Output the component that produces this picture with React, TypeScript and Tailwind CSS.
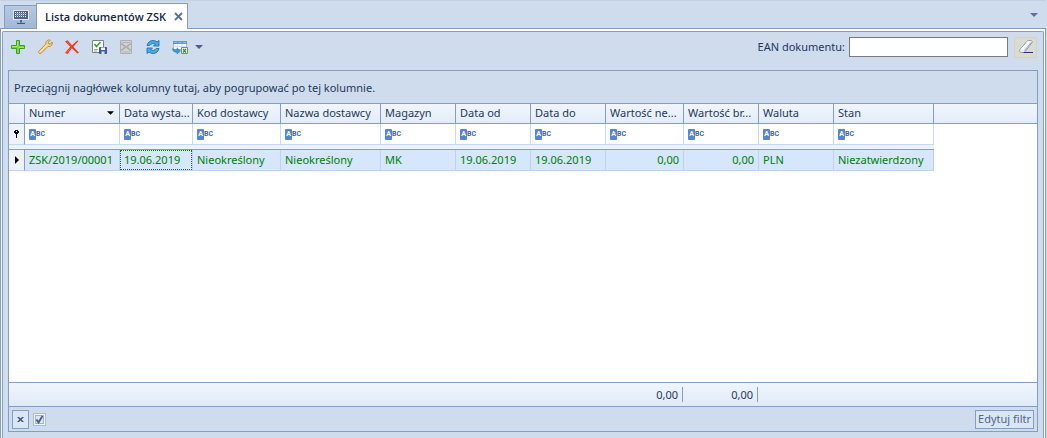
import { useState } from "react";

type Column = {
  title: string;
  value: string;
  numeric?: boolean;
  sorted?: boolean;
  sum?: string;
};

const columns: Column[] = [
  { title: "Numer", value: "ZSK/2019/00001", sorted: true },
  { title: "Data wystawienia", value: "19.06.2019" },
  { title: "Kod dostawcy", value: "Nieokreślony" },
  { title: "Nazwa dostawcy", value: "Nieokreślony" },
  { title: "Magazyn", value: "MK" },
  { title: "Data od", value: "19.06.2019" },
  { title: "Data do", value: "19.06.2019" },
  { title: "Wartość netto", value: "0,00", numeric: true, sum: "0,00" },
  { title: "Wartość brutto", value: "0,00", numeric: true, sum: "0,00" },
  { title: "Waluta", value: "PLN" },
  { title: "Stan", value: "Niezatwierdzony" },
];

const shortTitles: Record<string, string> = {
  "Data wystawienia": "Data wysta...",
  "Wartość netto": "Wartość ne...",
  "Wartość brutto": "Wartość br...",
};

function Columns() {
  return (
    <colgroup>
      <col className="w-4" />
      <col className="w-[95px]" />
      <col className="w-[73px]" />
      <col className="w-[88px]" />
      <col className="w-[100px]" />
      <col className="w-[75px]" />
      <col className="w-[75px]" />
      <col className="w-[75px]" />
      <col className="w-[78px]" />
      <col className="w-[75px]" />
      <col className="w-[75px]" />
      <col className="w-[100px]" />
      <col />
    </colgroup>
  );
}

function MonitorIcon() {
  return (
    <svg viewBox="0 0 16 16" className="size-4" aria-hidden="true">
      <rect x="0.5" y="1.5" width="15" height="9" fill="#4a6498" stroke="#dfe8f6" />
      <path d="M2 3.500h12M2 5.500h12M2 7.500h12" stroke="#e8f0fc" strokeDasharray="1 1" />
      <path d="M3 4.500h10M3 6.500h8" stroke="#7f9bcb" strokeDasharray="1 1" />
      <path d="M7 11h2v3H7z" fill="#4c6693" />
      <path d="M4 14.500h8" stroke="#3d5787" />
      <path d="M3 13.500h10" stroke="#8fa5c8" strokeWidth="0.500" />
    </svg>
  );
}

function PlusIcon() {
  return (
    <svg viewBox="0 0 16 16" className="size-4" aria-hidden="true">
      <path d="M6.500 1.500h3v5h5v3h-5v5h-3v-5h-5v-3h5z" fill="#7fd63a" stroke="#36a02c" />
      <path d="M7.500 2v5.500H2M8.500 8.500H14" stroke="#a6ea62" fill="none" />
    </svg>
  );
}

function WrenchIcon() {
  return (
    <svg viewBox="0 0 16 16" className="size-4" aria-hidden="true">
      <path
        d="M10 1.800c1-.9 2.300-1.100 3.300-.7l-2 2.100.4 1.500 1.500.4 2-2.100c.3 1.500 0 2.800-1 3.700-.9.800-2.100 1-3.200.7L4.600 13.900c-.7.800-1.800.9-2.500.2s-.6-1.800.2-2.500L8.800 5.200C8.500 4 8.900 2.700 10 1.800z"
        fill="#f7d483"
        stroke="#b98436"
        strokeWidth="0.9"
      />
      <path d="M3 12.800L9.800 6" stroke="#fff0bd" strokeWidth="0.9" />
    </svg>
  );
}

function DeleteIcon() {
  return (
    <svg viewBox="0 0 16 16" className="size-4" aria-hidden="true">
      <path
        d="M1 2.500L3.500 1.300 8 6.200 13.300 1.500 14.500 2 9.300 7.700 15 13.800 13.500 14.500 7.900 9.300 3.500 15 1 14 6.200 7.700z"
        fill="#f0371a"
      />
      <path d="M2.800 2.800l4.700 5M2.800 13.500L7 8.800" stroke="#ff6a45" strokeWidth="0.800" />
    </svg>
  );
}

function ApproveIcon() {
  return (
    <svg viewBox="0 0 16 16" className="size-4" aria-hidden="true">
      <path d="M1.500 1.500h11v12h-11z" fill="#fdfefc" stroke="#77857c" />
      <path d="M3.500 5l2 2.500L9.500 3" stroke="#2fa12f" strokeWidth="1.700" fill="none" />
      <path d="M3 10.500h4M3 12h3" stroke="#9aaaa0" />
      <path d="M8.500 8.500h7v6h-7z" fill="#3e5fb4" stroke="#3a56a3" />
      <path d="M10 8.500h4V11h-4z" fill="#f2f6ff" />
      <path d="M10.500 12.500h3V15h-3z" fill="#dbe6fa" />
    </svg>
  );
}

function CancelIcon() {
  return (
    <svg viewBox="0 0 16 16" className="size-4" aria-hidden="true">
      <path d="M2.500 1.500h11v13h-11z" fill="#cfd1d2" stroke="#aeb1b3" />
      <path d="M3 4.500l10 7M13 4.500l-10 7" stroke="#a3a6a8" strokeWidth="1.200" />
      <path d="M4 3.500h8M4 13h8M5 8h6" stroke="#b3b6b8" />
    </svg>
  );
}

function RefreshIcon() {
  return (
    <svg viewBox="0 0 16 16" className="size-4" aria-hidden="true">
      <path
        d="M2 6.500C2.600 3.500 5 1.500 8 1.500c1.500 0 2.900.5 4 1.400L14 1.500v5.500H8.500l1.800-1.900C8.500 4.200 6.200 4.300 4.800 6.500z"
        fill="#49a9e0"
        stroke="#1f76b4"
        strokeWidth="0.900"
      />
      <path
        d="M14 9.500c-.6 3-3 5-6 5-1.500 0-2.900-.5-4-1.400L2 14.500V9h5.500l-1.800 1.900c1.800.9 4.100.8 5.500-1.400z"
        fill="#49a9e0"
        stroke="#1f76b4"
        strokeWidth="0.900"
      />
    </svg>
  );
}

function ExportIcon() {
  return (
    <svg viewBox="0 0 16 16" className="size-4" aria-hidden="true">
      <path d="M1.500 2.500h13v8h-13z" fill="#f7fafd" stroke="#9dbbdd" />
      <path d="M1 2h14v3H1z" fill="#5b98d4" />
      <path d="M2 3.500h3M6.500 3.500h3M11 3.500h3" stroke="#8cbbe6" />
      <path d="M2 7.500h12M5.500 5v5M10 5v5" stroke="#d3e0f0" />
      <path d="M.5 9.500c-.2 2.300 1.700 4 4.500 3.800V15l3.500-3L5 9v1.700c-1.600.1-3-.2-4.500-1.200z" fill="#3d97d6" stroke="#2a73b3" strokeWidth="0.500" />
      <path d="M9.500 8.500h6v6h-6z" fill="#eef8ea" stroke="#4aa75c" />
      <path d="M11 10l3 3.500M14 10l-3 3.500" stroke="#2b9441" strokeWidth="1.200" />
    </svg>
  );
}

function EraserIcon() {
  return (
    <svg viewBox="0 0 16 16" className="size-4" aria-hidden="true">
      <path
        d="M2 10.500L8.800 2.500c.5-.6 1.100-1 1.900-1h2c1.400 0 2 1.200 1.200 2.300L7.200 12.500c-.5.600-1 .9-1.700.9H3.200c-1.500 0-2.100-1.700-1.200-2.900z"
        fill="#eef1f7"
        stroke="#9299ac"
      />
      <path d="M6.500 11.500L13.200 3.500" stroke="#9aa4c0" />
      <path d="M4 10L10.500 2.800" stroke="#fff" strokeWidth="1.800" />
      <path d="M5.500 13.500H15" stroke="#26306c" />
    </svg>
  );
}

function CaretDown({ className }: { className: string }) {
  return (
    <svg viewBox="0 0 8 4" className={className} aria-hidden="true">
      <path d="M0 0h8L4 4z" fill="currentColor" />
    </svg>
  );
}

function TextFilterMark() {
  return (
    <span className="flex shrink-0 items-center font-['Roboto','Liberation_Sans',sans-serif] text-[7px] leading-none font-bold text-[#46639c]">
      <span className="flex h-[11px] w-[7px] items-center justify-center rounded-[1px] bg-[#5585d6] text-white">
        A
      </span>
      BC
    </span>
  );
}

const tools = [
  { label: "Dodaj", icon: <PlusIcon /> },
  { label: "Edytuj", icon: <WrenchIcon /> },
  { label: "Usuń", icon: <DeleteIcon /> },
  { label: "Zatwierdź", icon: <ApproveIcon /> },
  { label: "Anuluj", icon: <CancelIcon />, disabled: true },
  { label: "Odśwież", icon: <RefreshIcon /> },
  { label: "Eksportuj", icon: <ExportIcon /> },
];

function Toolbar() {
  const [ean, setEan] = useState("");

  return (
    <div className="flex h-[38px] items-start justify-between pt-1 pl-0.5">
      <div className="flex h-[22px] items-center gap-[11px]">
        {tools.map((tool) => (
          <button key={tool.label} type="button" aria-label={tool.label} disabled={tool.disabled}>
            {tool.icon}
          </button>
        ))}
        <button type="button" aria-label="Więcej" className="-ml-1 text-[#4e5f8a]">
          <CaretDown className="h-1 w-2" />
        </button>
      </div>
      <div className="flex h-[22px] items-center pr-px">
        <label htmlFor="ean" className="mr-1">
          EAN dokumentu:
        </label>
        <input
          id="ean"
          value={ean}
          onChange={(e) => setEan(e.target.value)}
          className="h-5 w-[159px] border border-[#7a7a7a] bg-white px-1 outline-none"
        />
        <button
          type="button"
          aria-label="Wyczyść"
          onClick={() => setEan("")}
          className="ml-1.5 flex h-[21px] w-[23px] items-center justify-center rounded-[2px] border border-[#d8d3bd] bg-[#dadcd2]"
        >
          <EraserIcon />
        </button>
      </div>
    </div>
  );
}

function DocumentsTable() {
  return (
    <table className="w-full table-fixed border-separate border-spacing-0">
      <Columns />
      <thead>
        <tr className="h-5 bg-linear-to-b from-[#f1f6fc] to-[#e1ebf8]">
          <th className="border-r border-b border-[#859dc2] p-0" />
          {columns.map((col) => (
            <th
              key={col.title}
              className="overflow-hidden border-r border-b border-[#859dc2] px-1 pt-0 pb-0.5 text-left font-normal whitespace-nowrap"
            >
              <span className="flex items-center justify-between">
                {shortTitles[col.title] ?? col.title}
                {col.sorted && <CaretDown className="mr-px h-[4px] w-[7px] text-black" />}
              </span>
            </th>
          ))}
          <th className="border-b border-[#859dc2] p-0" />
        </tr>
      </thead>
      <tbody>
        <tr className="h-[21px]">
          <td className="border-r border-b border-r-[#859dc2] border-b-[#c3d6f2] bg-[#edf3fb] p-0">
            <svg viewBox="0 0 5 8" className="mx-auto h-2 w-[5px]" aria-hidden="true">
              <path d="M1 0h3v1h1v2H4v1H3v4H2V4H1V3H0V1h1z" fill="#000" />
              <path d="M2 1h1v1H2z" fill="#fff" />
            </svg>
          </td>
          {columns.map((col) => (
            <td key={col.title} className="border-r border-b border-[#c3d9f7] bg-white px-1 py-0">
              <span className="flex items-center">
                <TextFilterMark />
                <input aria-label={`Filtr: ${col.title}`} className="h-4 w-full min-w-0 bg-transparent px-1 outline-none" />
              </span>
            </td>
          ))}
          <td />
        </tr>
        <tr className="h-[5px]">
          <td colSpan={12} className="border-b border-[#859dc2] bg-[#edf3fb] p-0" />
          <td className="p-0" />
        </tr>
        <tr className="h-[21px] text-[#008000]">
          <td className="border-r border-b border-r-[#859dc2] border-b-[#c3d6f2] bg-[#edf3fb] p-0">
            <svg viewBox="0 0 4 8" className="mx-auto h-2 w-1" aria-hidden="true">
              <path d="M0 0l4 4-4 4z" fill="#000" />
            </svg>
          </td>
          {columns.map((col, i) => (
            <td
              key={col.title}
              className={`relative border-r border-b border-[#bcd3f3] bg-[#d5e6fd] px-1 py-0 whitespace-nowrap ${
                col.numeric ? "text-right" : ""
              }`}
            >
              {col.value}
              {i === 1 && <span className="absolute inset-0 border border-dotted border-[#008000]" />}
            </td>
          ))}
          <td />
        </tr>
      </tbody>
    </table>
  );
}

function Summary() {
  return (
    <table className="w-full table-fixed border-separate border-spacing-0 border-y border-[#859dc2] bg-linear-to-b from-[#f0f5fc] to-[#dfeaf8]">
      <Columns />
      <tbody>
        <tr className="h-[23px]">
          <td />
          {columns.map((col) => (
            <td key={col.title} className="py-0 pr-px pl-0 text-right">
              {col.sum && <span className="block border-r border-[#859dc2] pr-1 leading-[15px]">{col.sum}</span>}
            </td>
          ))}
          <td />
        </tr>
      </tbody>
    </table>
  );
}

export default function App() {
  const [filterOn, setFilterOn] = useState(true);

  return (
    <main className="flex h-screen flex-col overflow-hidden bg-[#cfdcee] pr-px font-['Noto_Sans','Open_Sans',sans-serif] text-[11px] leading-4 text-[#1e395b]">
      <nav className="flex h-7 shrink-0 items-end border-t border-[#c3d1e3] pl-1">
        <button
          type="button"
          aria-label="Pulpit"
          className="flex h-[23px] w-8 items-center justify-center border border-r-0 border-b-0 border-[#859dc2] bg-linear-to-b from-[#b6c8e2] to-[#a2b8d8]"
        >
          <MonitorIcon />
        </button>
        <div className="relative z-10 -mb-px flex h-[26px] items-center border border-b-0 border-[#859dc2] bg-white pr-1 pl-2 text-[#15253f]">
          <span className="font-['Open_Sans','Noto_Sans',sans-serif] font-semibold">Lista dokumentów ZSK</span>
          <button type="button" aria-label="Zamknij" className="ml-2">
            <svg viewBox="0 0 9 9" className="size-[9px]" aria-hidden="true">
              <path d="M1 1l7 7M8 1L1 8" stroke="#5c6e94" strokeWidth="1.800" />
            </svg>
          </button>
        </div>
        <button type="button" aria-label="Lista kart" className="mr-2 mb-[11px] ml-auto text-[#5f6f99]">
          <CaretDown className="h-1 w-2" />
        </button>
      </nav>

      <div className="flex min-h-0 flex-1 border-x border-t border-[#859dc2] bg-white px-px pt-0.5">
        <section className="flex min-w-0 flex-1 flex-col rounded-t-[2px] border-x border-t border-[#859dc2] bg-[#cfdcee] px-[5px] pb-1.5">
          <Toolbar />

          <div className="flex min-h-0 flex-1 flex-col border border-[#859dc2] bg-white">
            <div className="flex h-[33px] shrink-0 items-center border-b border-[#859dc2] bg-[#cfdcee] px-[5px] pt-0.5">
              Przeciągnij nagłówek kolumny tutaj, aby pogrupować po tej kolumnie.
            </div>
            <div className="min-h-0 flex-1">
              <DocumentsTable />
            </div>
            <Summary />
            <div className="flex h-6 shrink-0 items-center bg-[#cfdcee] px-[3px]">
              <button
                type="button"
                aria-label="Usuń filtr"
                className="flex h-[19px] w-[17px] items-center justify-center border border-[#859dc2] bg-[#d9e6f6]"
              >
                <svg viewBox="0 0 7 5" className="h-[5px] w-[7px]" aria-hidden="true">
                  <path d="M0 0h2l1.500 1.500L5 0h2L4.500 2.500 7 5H5L3.500 3.500 2 5H0l2.500-2.500z" fill="#3f4f78" />
                </svg>
              </button>
              <label className="relative ml-1 size-[13px] border border-[#a9bcd9] bg-[#f4f4f4] p-px">
                <input
                  type="checkbox"
                  aria-label="Filtr aktywny"
                  checked={filterOn}
                  onChange={(e) => setFilterOn(e.target.checked)}
                  className="block size-[9px] appearance-none border border-[#aab1bb] bg-[#e3e5e8]"
                />
                {filterOn && (
                  <svg viewBox="0 0 9 9" className="pointer-events-none absolute top-px left-px size-[9px]" aria-hidden="true">
                    <path d="M1.500 4.500l2 3 4-6.500" stroke="#3d649f" strokeWidth="1.900" fill="none" />
                  </svg>
                )}
              </label>
              <button
                type="button"
                className="ml-auto h-[19px] border border-[#859dc2] bg-[#d9e6f6] px-0.5 leading-4 text-[#50648c]"
              >
                Edytuj filtr
              </button>
            </div>
          </div>
        </section>
      </div>
    </main>
  );
}
